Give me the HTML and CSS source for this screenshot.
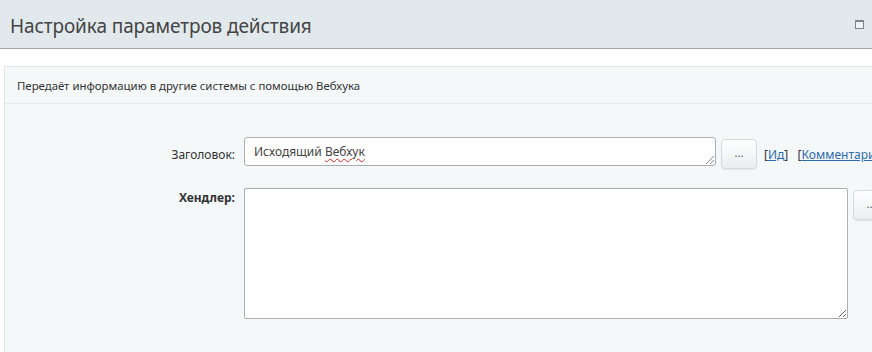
FILE: index.html
```html
<!DOCTYPE html>
<html lang="ru">
<head>
<meta charset="utf-8">
<link rel="stylesheet" href="styles.css">
</head>
<body>
<div class="header">
  <h1 class="title">Настройка параметров действия</h1>
  <span class="max-icon"></span>
</div>
<div class="panel">
  <div class="desc">Передаёт информацию в другие системы с помощью Вебхука</div>
  <div class="form">
    <div class="label">Заголовок:</div>
    <div class="field-row">
      <div class="field single">Исходящий <span class="misspelled">Вебхук</span></div>
      <button class="dots">...</button>
      <span class="links">[<a href="#">Ид</a>]&nbsp;&nbsp;&nbsp;[<a href="#">Комментарии</a>]</span>
    </div>
    <div class="label bold">Хендлер:</div>
    <div class="field-row top">
      <textarea class="field multi"></textarea>
      <button class="dots">...</button>
    </div>
  </div>
</div>
</body>
</html>
```

FILE: styles.css
```css
html, body {
  margin: 0;
  padding: 0;
  background: #ffffff;
  overflow: hidden;
}
body {
  font-family: "Noto Sans", "Open Sans", sans-serif;
  color: #333;
  width: 872px;
  height: 352px;
}
.header {
  box-sizing: border-box;
  height: 49px;
  background: #e2e9ed;
  border-bottom: 1px solid #a3a8ab;
  display: flex;
  align-items: center;
  justify-content: space-between;
  padding: 4px 8px 0 10px;
}
.title {
  margin: 0;
  font-weight: normal;
  font-size: 19px;
  color: #444;
  letter-spacing: -0.1px;
}
.max-icon {
  width: 7px;
  height: 6px;
  border: 1px solid #7d858c;
  border-top-width: 2px;
  background: #eef2f4;
  margin-bottom: 4px;
}
.panel {
  margin: 17px 0 0 4px;
  border: 1px solid #dfe6e9;
  border-right: none;
  background: #f5f8f9;
  height: 300px;
}
.desc {
  height: 36px;
  line-height: 37px;
  border-bottom: 1px solid #e3e9ec;
  padding-left: 12px;
  font-size: 11.4px;
  color: #333;
}
.form {
  display: grid;
  grid-template-columns: 230px 1fr;
  column-gap: 9px;
  row-gap: 19px;
  padding-top: 33px;
}
.label {
  text-align: right;
  font-size: 12px;
  color: #333;
  line-height: 27px;
  padding-top: 4px;
}
.label.bold {
  font-weight: bold;
  line-height: 18px;
  padding-top: 1px;
}
.field-row {
  display: flex;
  align-items: flex-start;
}
.field {
  box-sizing: border-box;
  background: #fff;
  border: 1px solid #b3b8bb;
  border-radius: 3px;
  font-family: inherit;
  font-size: 12px;
  color: #444;
}
.single {
  position: relative;
  width: 472px;
  height: 29px;
  padding: 5px 9px;
  border-color: #a9aeb2;
}
.single::after {
  content: "";
  position: absolute;
  right: 1px;
  bottom: 1px;
  width: 8px;
  height: 8px;
  background: linear-gradient(135deg, transparent 44%, #888 44%, #888 52%, transparent 52%, transparent 70%, #888 70%, #888 78%, transparent 78%);
}
.misspelled {
  text-decoration: underline wavy #e02020;
  text-decoration-thickness: 1px;
  text-underline-offset: 2px;
}
.multi {
  width: 604px;
  height: 131px;
  resize: both;
  border-color: #a9aeb2;
  border-radius: 2px;
  margin: 0;
  display: block;
}
.dots {
  box-sizing: border-box;
  width: 36px;
  height: 30px;
  margin: 2px 0 0 5px;
  border: 1px solid #d3d9dc;
  border-radius: 4px;
  background: linear-gradient(#ffffff, #e9eef0);
  box-shadow: 0 1px 1px rgba(0,0,0,0.08);
  font-family: inherit;
  font-size: 11px;
  color: #555;
  padding: 0 0 4px 0;
  flex-shrink: 0;
}
.links {
  margin: 10px 0 0 7px;
  font-size: 12px;
  color: #333;
  white-space: nowrap;
  line-height: 16px;
}
.links a {
  color: #2a6ab3;
  text-decoration: underline;
}
```
